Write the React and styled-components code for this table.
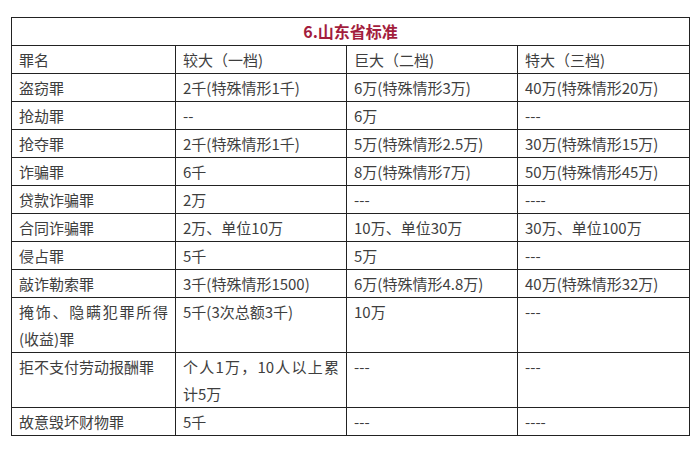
import React from "react";
import styled, { createGlobalStyle } from "styled-components";

const GlobalStyle = createGlobalStyle`
  html, body {
    margin: 0;
    padding: 0;
    background: #ffffff;
  }
  body {
    font-family: "Noto Sans CJK SC", "Noto Sans", sans-serif;
  }
`;

const Page = styled.div`
  padding: 17px 0 0 11px;
`;

const Table = styled.table`
  border-collapse: collapse;
  table-layout: fixed;
  width: 678px;
  color: #3e3e3e;
  font-size: 15px;
`;

const Col = styled.col`
  width: ${(p) => p.$w}px;
`;

const Cell = styled.td`
  border: 1px solid #222;
  padding: 0 7px;
  line-height: 27px;
  vertical-align: top;
  text-align: justify;
  word-break: break-all;
`;

const TitleCell = styled.td`
  border: 1px solid #222;
  padding: 0;
  line-height: 27px;
  text-align: center;
  font-weight: bold;
  font-size: 16px;
  color: #a31d3d;
`;

const colWidths = [164, 171, 171, 172];

const rows = [
  ["罪名", "较大（一档)", "巨大（二档)", "特大（三档)"],
  ["盗窃罪", "2千(特殊情形1千)", "6万(特殊情形3万)", "40万(特殊情形20万)"],
  ["抢劫罪", "--", "6万", "---"],
  ["抢夺罪", "2千(特殊情形1千)", "5万(特殊情形2.5万)", "30万(特殊情形15万)"],
  ["诈骗罪", "6千", "8万(特殊情形7万)", "50万(特殊情形45万)"],
  ["贷款诈骗罪", "2万", "---", "----"],
  ["合同诈骗罪", "2万、单位10万", "10万、单位30万", "30万、单位100万"],
  ["侵占罪", "5千", "5万", "---"],
  ["敲诈勒索罪", "3千(特殊情形1500)", "6万(特殊情形4.8万)", "40万(特殊情形32万)"],
  ["掩饰、隐瞒犯罪所得(收益)罪", "5千(3次总额3千)", "10万", "---"],
  ["拒不支付劳动报酬罪", "个人1万，10人以上累计5万", "---", "---"],
  ["故意毁坏财物罪", "5千", "---", "----"],
];

export default function App() {
  return (
    <Page>
      <GlobalStyle />
      <Table>
        <colgroup>
          {colWidths.map((w, i) => (
            <Col key={i} $w={w} />
          ))}
        </colgroup>
        <tbody>
          <tr>
            <TitleCell colSpan={4}>6.山东省标准</TitleCell>
          </tr>
          {rows.map((row, i) => (
            <tr key={i}>
              {row.map((text, j) => (
                <Cell key={j}>{text}</Cell>
              ))}
            </tr>
          ))}
        </tbody>
      </Table>
    </Page>
  );
}
